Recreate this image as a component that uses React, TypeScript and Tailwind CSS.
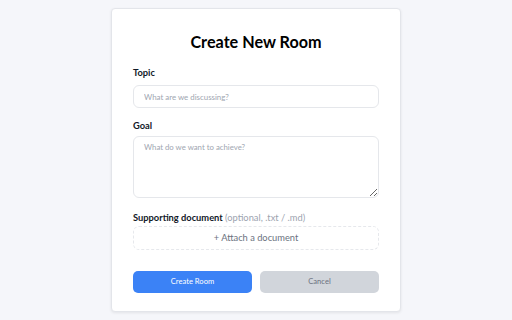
export default function App() {
  return (
    <div
      className="min-h-screen w-full bg-[#f5f6fa] flex justify-center pt-[8px]"
      style={{ fontFamily: 'Lato, "Noto Sans", sans-serif' }}
    >
      <div className="w-[290px] h-[304px] bg-white border border-[#e3e5ea] rounded-[4px] shadow-[0_1px_3px_rgba(0,0,0,0.08)] px-[21px] pt-[21px] flex flex-col">
        <h1 className="text-center text-[16.2px] leading-[24px] font-bold text-black">Create New Room</h1>

        <label className="mt-[12px] text-[9.3px] leading-[14px] font-bold text-[#111827]">Topic</label>
        <input
          className="mt-[5px] h-[23px] w-full rounded-[6px] border border-[#e5e7eb] px-[10px] text-[7.9px] outline-none placeholder:text-[#a0a6b1]"
          placeholder="What are we discussing?"
        />

        <label className="mt-[11px] text-[9.3px] leading-[14px] font-bold text-[#111827]">Goal</label>
        <textarea
          className="mt-[3px] h-[62px] w-full rounded-[6px] border border-[#e5e7eb] px-[10px] py-[5px] text-[7.8px] outline-none placeholder:text-[#a0a6b1]"
          placeholder="What do we want to achieve?"
        />

        <label className="mt-[13px] text-[9.3px] leading-[14px] font-bold text-[#111827]">
          Supporting document <span className="font-normal text-[#9ca3af]">(optional, .txt / .md)</span>
        </label>
        <button className="mt-[1px] h-[24px] w-full rounded-[6px] border border-dashed border-[#e6e8ec] text-[9.3px] text-[#6b7280]">
          + Attach a document
        </button>

        <div className="mt-[21px] grid grid-cols-2 gap-[8px]">
          <button className="h-[22px] rounded-[5px] bg-[#3b82f6] text-[7.6px] text-white">Create Room</button>
          <button className="h-[22px] rounded-[5px] bg-[#d1d5db] text-[7.6px] text-[#6b7280]">Cancel</button>
        </div>
      </div>
    </div>
  );
}
